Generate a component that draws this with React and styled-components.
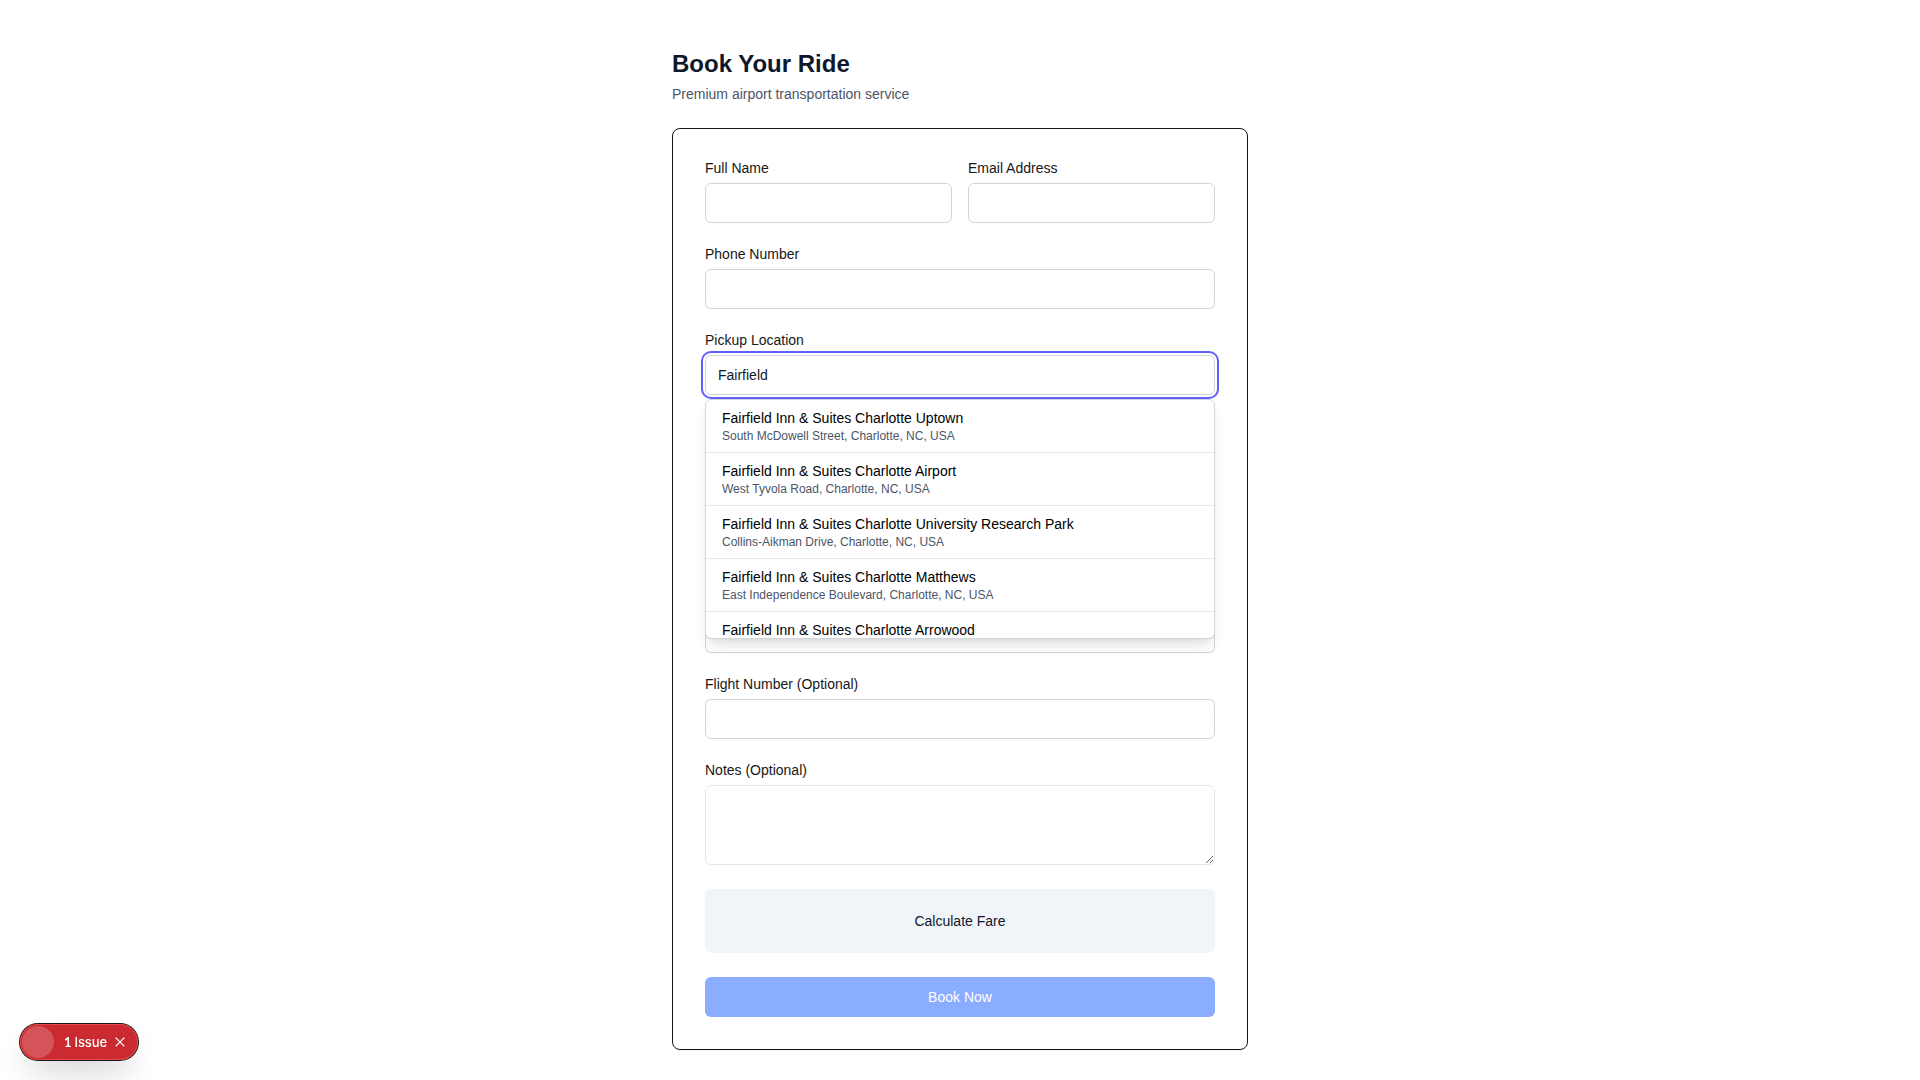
import React from "react";
import styled, { createGlobalStyle } from "styled-components";

const GlobalStyle = createGlobalStyle`
  *, *::before, *::after { box-sizing: border-box; }
  body {
    margin: 0;
    background: #fff;
    color: #171717;
    font-family: "Liberation Sans", Arial, Helvetica, sans-serif;
    font-size: 16px;
    line-height: 24px;
  }
  input, textarea, button { font: inherit; color: inherit; margin: 0; }
`;

const Page = styled.main`
  width: 576px;
  margin: 0 auto;
  padding: 48px 0 30px;
`;

const Header = styled.header`
  display: flex;
  flex-direction: column;
  gap: 4px;
  margin-bottom: 24px;
`;

const Title = styled.h1`
  margin: 0;
  font-size: 24px;
  line-height: 32px;
  font-weight: 700;
  color: #0f172a;
`;

const Subtitle = styled.p`
  margin: 0;
  font-size: 14px;
  line-height: 20px;
  color: #4b5568;
`;

const Card = styled.form`
  display: flex;
  flex-direction: column;
  gap: 24px;
  padding: 32px;
  border: 1px solid #171717;
  border-radius: 8px;
  background: #fff;
  box-shadow: 0 1px 2px rgba(0, 0, 0, 0.05);
`;

const TwoColumns = styled.div`
  display: grid;
  grid-template-columns: 1fr 1fr;
  gap: 16px;
`;

const FieldBox = styled.div`
  position: relative;
  display: flex;
  flex-direction: column;
  gap: 8px;
`;

const Label = styled.label`
  font-size: 14px;
  line-height: 14px;
`;

const Input = styled.input`
  width: 100%;
  height: 40px;
  padding: 8px 12px;
  border: 1px solid #d1d5db;
  border-radius: 6px;
  background: #fff;
  color: #0f172a;
  font-size: 14px;
  line-height: 20px;
  outline: none;
  box-shadow: ${(p) => (p.$focused ? "0 0 0 2px #fff, 0 0 0 4px #615fff" : "none")};
`;

const TextArea = styled.textarea`
  display: block;
  width: 100%;
  height: 80px;
  padding: 8px 12px;
  border: 1px solid #e2e8f0;
  border-radius: 6px;
  background: #fff;
  font-size: 14px;
  line-height: 20px;
  outline: none;
  resize: vertical;
`;

const Suggestions = styled.ul`
  position: absolute;
  z-index: 10;
  top: calc(100% + 4px);
  left: 0;
  right: 0;
  height: 240px;
  margin: 0;
  padding: 0;
  list-style: none;
  overflow: hidden;
  border: 1px solid #d1d5db;
  border-radius: 6px;
  background: #fff;
  box-shadow: 0 10px 15px -3px rgba(0, 0, 0, 0.1), 0 4px 6px -4px rgba(0, 0, 0, 0.1);
`;

const Suggestion = styled.li`
  padding: 8px 16px;
  border-bottom: 1px solid #e5e7eb;
`;

const PlaceName = styled.div`
  font-size: 14px;
  line-height: 20px;
  color: #000;
`;

const PlaceAddress = styled.div`
  font-size: 12px;
  line-height: 16px;
  color: #4b5568;
`;

const Button = styled.button`
  display: flex;
  align-items: center;
  justify-content: center;
  width: 100%;
  height: ${(p) => (p.$primary ? "40px" : "64px")};
  padding: 0;
  border: 0;
  border-radius: 6px;
  background: ${(p) => (p.$primary ? "#8aadff" : "#f1f5f9")};
  color: ${(p) => (p.$primary ? "#fff" : "#0f172a")};
  font-size: 14px;
  line-height: 20px;
`;

const IssueBadge = styled.aside`
  position: fixed;
  left: 20px;
  bottom: 20px;
  display: flex;
  align-items: center;
  width: 118px;
  height: 36px;
  padding: 0 12px 0 2px;
  border-radius: 18px;
  background: #ca2a30;
  color: #fff;
  box-shadow: 0 0 0 1px #171717, inset 0 0 0 1px #e5484d,
    0 16px 32px -8px rgba(0, 0, 0, 0.24);
`;

const IssueMark = styled.span`
  width: 32px;
  height: 32px;
  margin-right: 10px;
  border-radius: 50%;
  background: rgba(255, 255, 255, 0.2);
`;

const IssueText = styled.span`
  display: flex;
  flex: 1;
  align-items: baseline;
  gap: 3px;
  font-family: Inter, "Liberation Sans", sans-serif;
  font-size: 13px;
  font-weight: 500;
  line-height: 16px;
  letter-spacing: -0.1px;
  white-space: nowrap;
`;

const IssueCount = styled.span`
  font-family: Lato, "DejaVu Sans", sans-serif;
  font-weight: 700;
`;

const places = [
  ["Fairfield Inn & Suites Charlotte Uptown", "South McDowell Street, Charlotte, NC, USA"],
  ["Fairfield Inn & Suites Charlotte Airport", "West Tyvola Road, Charlotte, NC, USA"],
  ["Fairfield Inn & Suites Charlotte University Research Park", "Collins-Aikman Drive, Charlotte, NC, USA"],
  ["Fairfield Inn & Suites Charlotte Matthews", "East Independence Boulevard, Charlotte, NC, USA"],
  ["Fairfield Inn & Suites Charlotte Arrowood", ""],
];

function Field({ label, children, ...inputProps }) {
  return (
    <FieldBox>
      {label && <Label>{label}</Label>}
      <Input {...inputProps} />
      {children}
    </FieldBox>
  );
}

/* Keeps the height of the fields that lie behind the open suggestion list. */
const CoveredFields = styled.div`
  height: 148px;
  margin-bottom: 22px;
`;

export default function App() {
  return (
    <>
      <GlobalStyle />
      <Page>
        <Header>
          <Title>Book Your Ride</Title>
          <Subtitle>Premium airport transportation service</Subtitle>
        </Header>
        <Card>
          <TwoColumns>
            <Field label="Full Name" />
            <Field label="Email Address" />
          </TwoColumns>
          <Field label="Phone Number" />
          <Field label="Pickup Location" defaultValue="Fairfield" $focused>
            <Suggestions>
              {places.map(([name, address]) => (
                <Suggestion key={name}>
                  <PlaceName>{name}</PlaceName>
                  <PlaceAddress>{address}</PlaceAddress>
                </Suggestion>
              ))}
            </Suggestions>
          </Field>
          <CoveredFields />
          <Field />
          <Field label="Flight Number (Optional)" />
          <FieldBox>
            <Label>Notes (Optional)</Label>
            <TextArea />
          </FieldBox>
          <Button type="button">Calculate Fare</Button>
          <Button type="button" $primary>Book Now</Button>
        </Card>
      </Page>
      <IssueBadge>
        <IssueMark />
        <IssueText>
          <IssueCount>1</IssueCount> Issue
        </IssueText>
        <svg width="12" height="12" viewBox="0 0 12 12" fill="none">
          <path d="M1.6 1.6L10.4 10.4M10.4 1.6L1.6 10.4" stroke="#fff" strokeWidth="1.3" />
        </svg>
      </IssueBadge>
    </>
  );
}
